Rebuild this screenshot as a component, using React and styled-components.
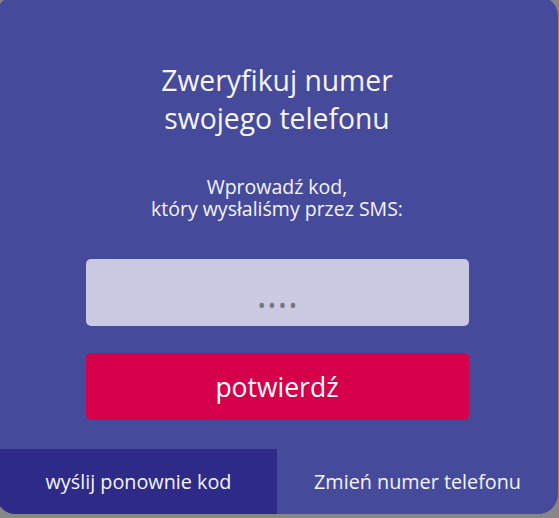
import styled, { createGlobalStyle } from "styled-components";

const GlobalStyle = createGlobalStyle`
  html, body {
    margin: 0;
    padding: 0;
    background: #878787;
    overflow: hidden;
  }
  body {
    font-family: "Open Sans", "Noto Sans", sans-serif;
  }
`;

const Page = styled.div`
  width: 559px;
  height: 518px;
  position: relative;
  overflow: hidden;
`;

const Card = styled.div`
  margin: -4px 0 0 -4px;
  width: 562px;
  height: 518px;
  background: #464a9b;
  border-radius: 20px;
  overflow: hidden;
  display: flex;
  flex-direction: column;
  align-items: center;
  color: #f5f5fa;
`;

const Title = styled.h1`
  margin: 65px 0 0;
  font-size: 28.3px;
  font-weight: 400;
  line-height: 38px;
  text-align: center;
`;

const Subtitle = styled.p`
  margin: 39px 0 0;
  font-size: 19.5px;
  line-height: 22px;
  text-align: center;
`;

const CodeInput = styled.input`
  margin-top: 39px;
  box-sizing: border-box;
  width: 383px;
  height: 67px;
  border: none;
  border-radius: 5px;
  background: #c9c9e2;
  padding: 25px 0 0 3px;
  font-family: inherit;
  font-size: 21px;
  letter-spacing: 2.5px;
  text-align: center;
  color: #333;
  outline: none;

  &::placeholder {
    color: #76767f;
  }
`;

const ConfirmButton = styled.button`
  margin-top: 27px;
  width: 383px;
  height: 67px;
  border: none;
  border-radius: 5px;
  background: #d6004a;
  color: #fff;
  font-family: inherit;
  font-size: 26.5px;
  padding-top: 2px;
  cursor: pointer;
`;

const Footer = styled.div`
  margin-top: auto;
  width: 100%;
  height: 65px;
  display: grid;
  grid-template-columns: 1fr 1fr;
`;

const FooterButton = styled.button`
  border: none;
  background: ${({ $active }) => ($active ? "#2e2a87" : "transparent")};
  color: #f5f5fa;
  font-family: inherit;
  font-size: 19.8px;
  padding: 0 0 0 ${({ $active }) => ($active ? "4px" : "0")};
  cursor: pointer;
`;

export default function App() {
  return (
    <Page>
      <GlobalStyle />
      <Card>
        <Title>
          Zweryfikuj numer
          <br />
          swojego telefonu
        </Title>
        <Subtitle>
          Wprowadź kod,
          <br />
          który wysłaliśmy przez SMS:
        </Subtitle>
        <CodeInput type="text" placeholder="••••" />
        <ConfirmButton>potwierdź</ConfirmButton>
        <Footer>
          <FooterButton $active>wyślij ponownie kod</FooterButton>
          <FooterButton>Zmień numer telefonu</FooterButton>
        </Footer>
      </Card>
    </Page>
  );
}
